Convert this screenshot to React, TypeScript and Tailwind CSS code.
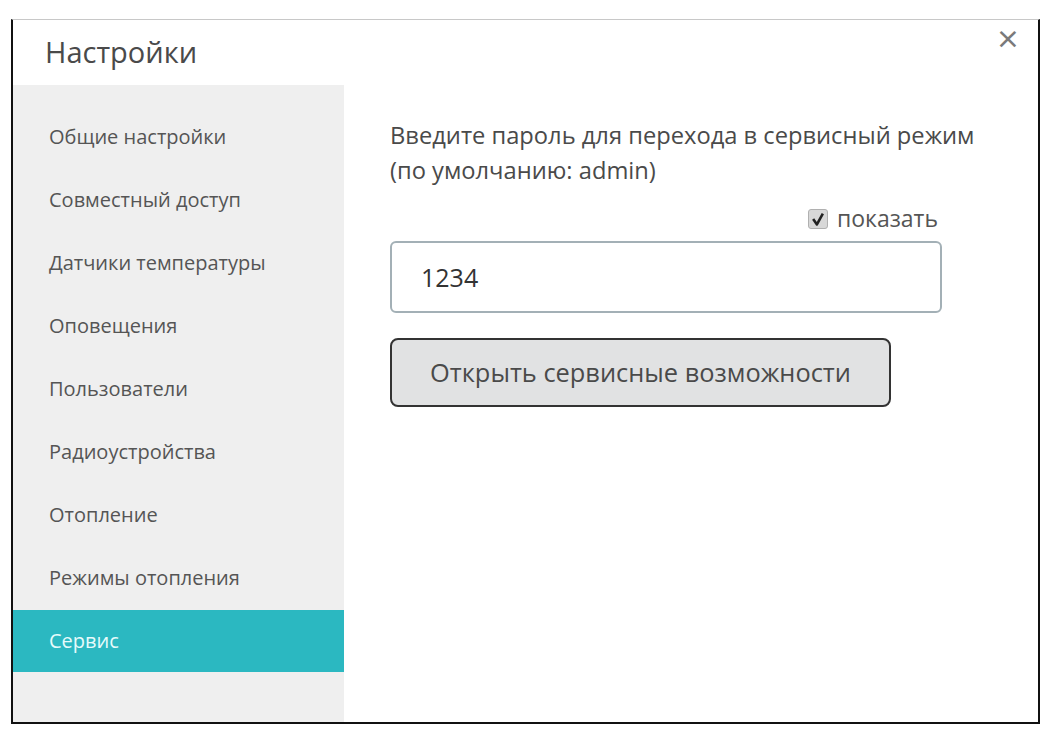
import { useState } from "react";

const items = [
  "Общие настройки",
  "Совместный доступ",
  "Датчики температуры",
  "Оповещения",
  "Пользователи",
  "Радиоустройства",
  "Отопление",
  "Режимы отопления",
  "Сервис",
];

export default function App() {
  const [active, setActive] = useState(8);
  const [show, setShow] = useState(true);
  const [pwd, setPwd] = useState("1234");

  return (
    <div className="w-[1064px] h-[743px] bg-white pl-[11px] pt-[19px] font-['Open_Sans','Noto_Sans',sans-serif] text-[#4a4a4a]">
      <div className="relative w-[1029px] h-[705px] flex flex-col bg-white border-t border-t-[#c8c8c8] border-x-2 border-x-[#111] border-b-2 border-b-[#111]">
        {/* Заголовок */}
        <div className="h-[65px] flex items-center pl-[32px] shrink-0">
          <h1 className="text-[29px] text-[#4a4a4a] leading-none pb-[2px]">Настройки</h1>
        </div>
        <button
          type="button"
          className="absolute right-[18px] top-[4px] text-[29px] leading-none text-[#7a7a7a] font-['DejaVu_Sans',sans-serif]"
        >
          ×
        </button>

        <div className="flex flex-1 min-h-0">
          {/* Меню */}
          <nav className="w-[331px] bg-[#efefef] pt-[21px] shrink-0">
            {items.map((item, idx) => (
              <div
                key={idx}
                onClick={() => setActive(idx)}
                className={
                  idx === active
                    ? "h-[62px] mb-px flex items-center pl-[36px] text-[20px] bg-[#2bb8c1] text-[#e6fbfb] cursor-pointer"
                    : "h-[62px] mb-px flex items-center pl-[36px] text-[20px] text-[#555] cursor-pointer"
                }
              >
                {item}
              </div>
            ))}
          </nav>

          {/* Контент */}
          <div className="flex-1 pl-[46px] pt-[33px]">
            <p className="text-[23.7px] leading-[35px] text-[#4a4a4a] whitespace-nowrap">
              Введите пароль для перехода в сервисный режим
              <br />
              (по умолчанию: admin)
            </p>
            <div className="w-[552px] flex justify-end pr-[4px] mt-[19px]">
              <label className="flex items-center gap-[9px] cursor-pointer">
                <span
                  onClick={() => setShow(!show)}
                  className="w-[20px] h-[20px] rounded-[3px] border border-[#b0b0b0] bg-[#d8d8d8] flex items-center justify-center"
                >
                  {show && (
                    <svg width="14" height="14" viewBox="0 0 13 13">
                      <path d="M2 6.5 L5.5 11.5 L11 1.5" fill="none" stroke="#222" strokeWidth="2.4" strokeLinejoin="round" />
                    </svg>
                  )}
                </span>
                <span className="text-[23px] text-[#555] leading-none">показать</span>
              </label>
            </div>
            <input
              type={show ? "text" : "password"}
              value={pwd}
              onChange={(e) => setPwd(e.target.value)}
              className="mt-[11px] w-[552px] h-[72px] border-2 border-[#a3b0b6] rounded-[6px] pl-[29px] text-[25px] text-[#333] outline-none"
            />
            <button
              type="button"
              className="mt-[25px] block w-[501px] h-[69px] bg-[#e1e2e3] border-2 border-[#333] rounded-[8px] text-[25.4px] text-[#4a4a4a]"
            >
              Открыть сервисные возможности
            </button>
          </div>
        </div>
      </div>
    </div>
  );
}
